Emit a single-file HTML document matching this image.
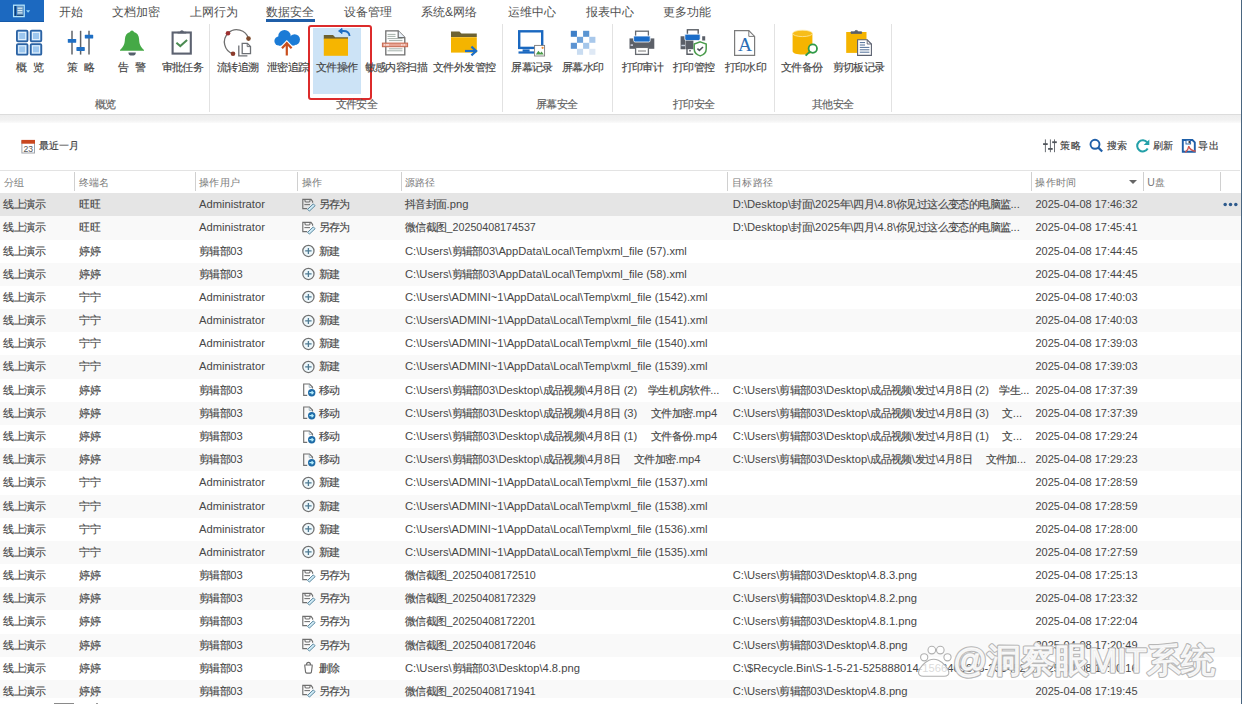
<!DOCTYPE html><html><head><meta charset="utf-8"><style>
html,body{margin:0;padding:0;width:1242px;height:704px;overflow:hidden;background:#fff;font-family:"Liberation Sans",sans-serif;}
.a{position:absolute;}
.t{position:absolute;white-space:pre;line-height:1;}
.c{-webkit-text-stroke:0.15px currentColor}
svg{display:block}
</style></head><body>

<div class="a" style="left:0;top:0;width:44.4px;height:21.7px;background:#1c69c0;box-shadow:inset 0 -1px 0 #1559a8"></div>
<svg class="a" style="left:12px;top:4px" width="20" height="14" viewBox="0 0 20 14"><rect x="1.6" y="1.2" width="10.6" height="11.4" fill="#1c69c0" stroke="#b4e4fa" stroke-width="1.3"/><rect x="2.6" y="2" width="1.2" height="9.8" fill="#0c3566"/><rect x="4.9" y="2.2" width="6.2" height="9.4" fill="#6f9cc2"/><path d="M5.6 4.2h4.8M5.6 6.6h4.8M5.6 8.9h4.8" stroke="#e8f6fe" stroke-width="1"/><rect x="4.9" y="10.8" width="6.2" height="0.9" fill="#0c3566"/><path d="M14 6.2h4.2l-2.1 2.6z" fill="#92d4f6"/></svg>
<div class="t" style="left:59.3px;top:5.5px;font-size:12px;color:#505050;"><span style="font-size:12px;letter-spacing:0px">开始</span></div>
<div class="t" style="left:112.2px;top:5.5px;font-size:12px;color:#505050;"><span style="font-size:12px;letter-spacing:0px">文档加密</span></div>
<div class="t" style="left:189.5px;top:5.5px;font-size:12px;color:#505050;"><span style="font-size:12px;letter-spacing:0px">上网行为</span></div>
<div class="t" style="left:266.3px;top:5.5px;font-size:12px;color:#505050;"><span style="font-size:12px;letter-spacing:0px">数据安全</span></div>
<div class="t" style="left:344px;top:5.5px;font-size:12px;color:#505050;"><span style="font-size:12px;letter-spacing:0px">设备管理</span></div>
<div class="t" style="left:421px;top:5.5px;font-size:12px;color:#505050;"><span style="font-size:12px;letter-spacing:0px">系统</span>&amp;<span style="font-size:12px;letter-spacing:0px">网络</span></div>
<div class="t" style="left:507.9px;top:5.5px;font-size:12px;color:#505050;"><span style="font-size:12px;letter-spacing:0px">运维中心</span></div>
<div class="t" style="left:586px;top:5.5px;font-size:12px;color:#505050;"><span style="font-size:12px;letter-spacing:0px">报表中心</span></div>
<div class="t" style="left:662.5px;top:5.5px;font-size:12px;color:#505050;"><span style="font-size:12px;letter-spacing:0px">更多功能</span></div>
<div class="a" style="left:266.3px;top:19.3px;width:48.3px;height:2.4px;background:#1f5ea8"></div>
<div class="a" style="left:313.2px;top:28px;width:47.4px;height:66px;background:#cce3f6"></div>
<div class="a" style="left:308.2px;top:25.3px;width:60.2px;height:70.6px;border:2.8px solid #dc2b2b;border-radius:3px"></div>
<div class="a" style="left:209.1px;top:24px;width:1px;height:88px;background:#e2e2e2"></div>
<div class="a" style="left:501.5px;top:24px;width:1px;height:88px;background:#e2e2e2"></div>
<div class="a" style="left:612.2px;top:24px;width:1px;height:88px;background:#e2e2e2"></div>
<div class="a" style="left:773.9px;top:24px;width:1px;height:88px;background:#e2e2e2"></div>
<div class="a" style="left:890.8px;top:24px;width:1px;height:88px;background:#e2e2e2"></div>
<div class="a" style="left:0;top:113.8px;width:1241px;height:1.2px;background:#dcdcdc"></div>
<div class="a" style="left:0;top:115px;width:1241px;height:7.5px;background:linear-gradient(#eeeeee,#f1f1f1 60%,#fbfbfb)"></div>
<div class="t" style="left:15.6px;top:62.3px;font-size:10.5px;color:#444;"><span class="c" style="font-size:11px;letter-spacing:-0.6px">概</span></div>
<div class="t" style="left:32.8px;top:62.3px;font-size:10.5px;color:#444;"><span class="c" style="font-size:11px;letter-spacing:-0.6px">览</span></div>
<div class="t" style="left:66.5px;top:62.3px;font-size:10.5px;color:#444;"><span class="c" style="font-size:11px;letter-spacing:-0.6px">策</span></div>
<div class="t" style="left:83.5px;top:62.3px;font-size:10.5px;color:#444;"><span class="c" style="font-size:11px;letter-spacing:-0.6px">略</span></div>
<div class="t" style="left:118px;top:62.3px;font-size:10.5px;color:#444;"><span class="c" style="font-size:11px;letter-spacing:-0.6px">告</span></div>
<div class="t" style="left:135px;top:62.3px;font-size:10.5px;color:#444;"><span class="c" style="font-size:11px;letter-spacing:-0.6px">警</span></div>
<div class="t" style="left:161.6px;top:62.3px;font-size:10.5px;color:#444;"><span class="c" style="font-size:11px;letter-spacing:-0.6px">审批任务</span></div>
<div class="t" style="left:217px;top:62.3px;font-size:10.5px;color:#444;"><span class="c" style="font-size:11px;letter-spacing:-0.6px">流转追溯</span></div>
<div class="t" style="left:267px;top:62.3px;font-size:10.5px;color:#444;"><span class="c" style="font-size:11px;letter-spacing:-0.6px">泄密追踪</span></div>
<div class="t" style="left:316px;top:62.3px;font-size:10.5px;color:#444;"><span class="c" style="font-size:11px;letter-spacing:-0.6px">文件操作</span></div>
<div class="t" style="left:364.5px;top:62.3px;font-size:10.5px;color:#444;"><span class="c" style="font-size:11px;letter-spacing:-0.6px">敏感内容扫描</span></div>
<div class="t" style="left:433px;top:62.3px;font-size:10.5px;color:#444;"><span class="c" style="font-size:11px;letter-spacing:-0.6px">文件外发管控</span></div>
<div class="t" style="left:511.3px;top:62.3px;font-size:10.5px;color:#444;"><span class="c" style="font-size:11px;letter-spacing:-0.6px">屏幕记录</span></div>
<div class="t" style="left:561.8px;top:62.3px;font-size:10.5px;color:#444;"><span class="c" style="font-size:11px;letter-spacing:-0.6px">屏幕水印</span></div>
<div class="t" style="left:621.7px;top:62.3px;font-size:10.5px;color:#444;"><span class="c" style="font-size:11px;letter-spacing:-0.6px">打印审计</span></div>
<div class="t" style="left:673px;top:62.3px;font-size:10.5px;color:#444;"><span class="c" style="font-size:11px;letter-spacing:-0.6px">打印管控</span></div>
<div class="t" style="left:724.5px;top:62.3px;font-size:10.5px;color:#444;"><span class="c" style="font-size:11px;letter-spacing:-0.6px">打印水印</span></div>
<div class="t" style="left:781px;top:62.3px;font-size:10.5px;color:#444;"><span class="c" style="font-size:11px;letter-spacing:-0.6px">文件备份</span></div>
<div class="t" style="left:832.7px;top:62.3px;font-size:10.5px;color:#444;"><span class="c" style="font-size:11px;letter-spacing:-0.6px">剪切板记录</span></div>
<div class="t" style="left:94.8px;top:99.4px;font-size:10.5px;color:#606060;"><span class="c" style="font-size:11px;letter-spacing:-0.6px">概览</span></div>
<div class="t" style="left:335.7px;top:99.4px;font-size:10.5px;color:#606060;"><span class="c" style="font-size:11px;letter-spacing:-0.6px">文件安全</span></div>
<div class="t" style="left:536px;top:99.4px;font-size:10.5px;color:#606060;"><span class="c" style="font-size:11px;letter-spacing:-0.6px">屏幕安全</span></div>
<div class="t" style="left:673px;top:99.4px;font-size:10.5px;color:#606060;"><span class="c" style="font-size:11px;letter-spacing:-0.6px">打印安全</span></div>
<div class="t" style="left:812px;top:99.4px;font-size:10.5px;color:#606060;"><span class="c" style="font-size:11px;letter-spacing:-0.6px">其他安全</span></div>
<div class="t" style="left:38.9px;top:140px;font-size:10.5px;color:#3c3c3c;"><span class="c" style="font-size:10px;letter-spacing:0px">最近一月</span></div>
<div class="t" style="left:1060.4px;top:140px;font-size:10.5px;color:#3c3c3c;"><span class="c" style="font-size:10px;letter-spacing:0.2px">策略</span></div>
<div class="t" style="left:1106.7px;top:140px;font-size:10.5px;color:#3c3c3c;"><span class="c" style="font-size:10px;letter-spacing:0.2px">搜索</span></div>
<div class="t" style="left:1152.6px;top:140px;font-size:10.5px;color:#3c3c3c;"><span class="c" style="font-size:10px;letter-spacing:0.2px">刷新</span></div>
<div class="t" style="left:1198.4px;top:140px;font-size:10.5px;color:#3c3c3c;"><span class="c" style="font-size:10px;letter-spacing:0.2px">导出</span></div>
<div class="a" style="left:0;top:170px;width:1240px;height:1px;background:#e3e3e3"></div>
<div class="a" style="left:0;top:192.6px;width:1240px;height:1.3px;background:#bdbdbd"></div>
<div class="a" style="left:74.2px;top:172px;width:1px;height:18.5px;background:#d0d0d0"></div>
<div class="a" style="left:194.6px;top:172px;width:1px;height:18.5px;background:#d0d0d0"></div>
<div class="a" style="left:297.1px;top:172px;width:1px;height:18.5px;background:#d0d0d0"></div>
<div class="a" style="left:400.5px;top:172px;width:1px;height:18.5px;background:#d0d0d0"></div>
<div class="a" style="left:727px;top:172px;width:1px;height:18.5px;background:#d0d0d0"></div>
<div class="a" style="left:1031.1px;top:172px;width:1px;height:18.5px;background:#d0d0d0"></div>
<div class="a" style="left:1142.5px;top:172px;width:1px;height:18.5px;background:#d0d0d0"></div>
<div class="a" style="left:1219.7px;top:172px;width:1px;height:18.5px;background:#d0d0d0"></div>
<div class="t" style="left:4px;top:176.7px;font-size:10.5px;color:#7a7a7a;"><span style="font-size:10px;letter-spacing:0.4px">分组</span></div>
<div class="t" style="left:78.5px;top:176.7px;font-size:10.5px;color:#7a7a7a;"><span style="font-size:10px;letter-spacing:0.4px">终端名</span></div>
<div class="t" style="left:198.8px;top:176.7px;font-size:10.5px;color:#7a7a7a;"><span style="font-size:10px;letter-spacing:0.4px">操作用户</span></div>
<div class="t" style="left:302px;top:176.7px;font-size:10.5px;color:#7a7a7a;"><span style="font-size:10px;letter-spacing:0.4px">操作</span></div>
<div class="t" style="left:404.5px;top:176.7px;font-size:10.5px;color:#7a7a7a;"><span style="font-size:10px;letter-spacing:0.4px">源路径</span></div>
<div class="t" style="left:732px;top:176.7px;font-size:10.5px;color:#7a7a7a;"><span style="font-size:10px;letter-spacing:0.4px">目标路径</span></div>
<div class="t" style="left:1035.2px;top:176.7px;font-size:10.5px;color:#7a7a7a;"><span style="font-size:10px;letter-spacing:0.4px">操作时间</span></div>
<div class="t" style="left:1147.3px;top:176.7px;font-size:10.5px;color:#7a7a7a;">U<span style="font-size:10px;letter-spacing:0.4px">盘</span></div>
<svg class="a" style="left:1129.4px;top:180.2px" width="8" height="4" viewBox="0 0 8 4"><path d="M0 0h8l-4 4z" fill="#666"/></svg>
<div class="a" style="left:0;top:193.30px;width:1241px;height:23.22px;background:#e5e5e5"></div>
<div class="t" style="left:3.4px;top:199.3px;font-size:10.6px;color:#474747;"><span class="c" style="font-size:11px;letter-spacing:-0.6px">线上演示</span></div>
<div class="t" style="left:79.2px;top:199.3px;font-size:10.6px;color:#474747;"><span class="c" style="font-size:11px;letter-spacing:-0.6px">旺旺</span></div>
<div class="t" style="left:199px;top:199.3px;font-size:11.2px;color:#474747;">Administrator</div>
<div class="a" style="left:300px;top:196.80px"><svg width="16" height="16" viewBox="0 0 16 16"><path d="M7.2 11.6H2.8V2.4H11l1.6 2V5.8" fill="none" stroke="#6f6f6f" stroke-width="1.15"/><path d="M5 2.4V4.1Q5 5 6 5H9Q10 5 10 4.1V2.4" fill="none" stroke="#6f6f6f" stroke-width="1.1"/><path d="M4.4 7.6H10" stroke="#6f6f6f" stroke-width="1.05"/><path d="M7.6 12.3L13.3 6.9L15.1 8.7L9.4 14.1Z" fill="#d2ecf7" stroke="#4f7f99" stroke-width="0.95"/></svg></div>
<div class="t" style="left:318.7px;top:199.3px;font-size:10.6px;color:#474747;"><span class="c" style="font-size:11px;letter-spacing:-0.6px">另存为</span></div>
<div class="t" style="left:405px;top:199.3px;font-size:11.2px;color:#474747;"><span class="c" style="font-size:11px;letter-spacing:-0.6px">抖音封面</span>.png</div>
<div class="t" style="left:732.7px;top:199.3px;font-size:11.2px;color:#474747;">D:\Desktop\<span class="c" style="font-size:11px;letter-spacing:-0.6px">封面</span>\2025<span class="c" style="font-size:11px;letter-spacing:-0.6px">年</span>\<span class="c" style="font-size:11px;letter-spacing:-0.6px">四月</span>\4.8\<span class="c" style="font-size:11px;letter-spacing:-0.6px">你见过这么变态的电脑监</span>...</div>
<div class="t" style="left:1035.4px;top:199.3px;font-size:11px;color:#474747;">2025-04-08 17:46:32</div>
<div class="a" style="left:0;top:216.47px;width:1241px;height:23.22px;background:#f9f9f9"></div>
<div class="t" style="left:3.4px;top:222.47000000000003px;font-size:10.6px;color:#474747;"><span class="c" style="font-size:11px;letter-spacing:-0.6px">线上演示</span></div>
<div class="t" style="left:79.2px;top:222.47000000000003px;font-size:10.6px;color:#474747;"><span class="c" style="font-size:11px;letter-spacing:-0.6px">旺旺</span></div>
<div class="t" style="left:199px;top:222.47000000000003px;font-size:11.2px;color:#474747;">Administrator</div>
<div class="a" style="left:300px;top:219.97px"><svg width="16" height="16" viewBox="0 0 16 16"><path d="M7.2 11.6H2.8V2.4H11l1.6 2V5.8" fill="none" stroke="#6f6f6f" stroke-width="1.15"/><path d="M5 2.4V4.1Q5 5 6 5H9Q10 5 10 4.1V2.4" fill="none" stroke="#6f6f6f" stroke-width="1.1"/><path d="M4.4 7.6H10" stroke="#6f6f6f" stroke-width="1.05"/><path d="M7.6 12.3L13.3 6.9L15.1 8.7L9.4 14.1Z" fill="#d2ecf7" stroke="#4f7f99" stroke-width="0.95"/></svg></div>
<div class="t" style="left:318.7px;top:222.47000000000003px;font-size:10.6px;color:#474747;"><span class="c" style="font-size:11px;letter-spacing:-0.6px">另存为</span></div>
<div class="t" style="left:405px;top:222.47000000000003px;font-size:10.7px;color:#474747;"><span class="c" style="font-size:11px;letter-spacing:-0.6px">微信截图</span>_20250408174537</div>
<div class="t" style="left:732.7px;top:222.47000000000003px;font-size:11.2px;color:#474747;">D:\Desktop\<span class="c" style="font-size:11px;letter-spacing:-0.6px">封面</span>\2025<span class="c" style="font-size:11px;letter-spacing:-0.6px">年</span>\<span class="c" style="font-size:11px;letter-spacing:-0.6px">四月</span>\4.8\<span class="c" style="font-size:11px;letter-spacing:-0.6px">你见过这么变态的电脑监</span>...</div>
<div class="t" style="left:1035.4px;top:222.47000000000003px;font-size:11px;color:#474747;">2025-04-08 17:45:41</div>
<div class="a" style="left:0;top:239.64px;width:1241px;height:23.22px;background:#ffffff"></div>
<div class="t" style="left:3.4px;top:245.64000000000001px;font-size:10.6px;color:#474747;"><span class="c" style="font-size:11px;letter-spacing:-0.6px">线上演示</span></div>
<div class="t" style="left:79.2px;top:245.64000000000001px;font-size:10.6px;color:#474747;"><span class="c" style="font-size:11px;letter-spacing:-0.6px">婷婷</span></div>
<div class="t" style="left:199px;top:245.64000000000001px;font-size:11.2px;color:#474747;"><span class="c" style="font-size:11px;letter-spacing:-0.6px">剪辑部</span>03</div>
<div class="a" style="left:300px;top:243.14px"><svg width="16" height="16" viewBox="0 0 16 16"><circle cx="8.4" cy="7.9" r="5.6" fill="#eef8fc" stroke="#717171" stroke-width="1.25"/><path d="M8.4 4.9v6.1M5.2 7.9h6.4" stroke="#4f7a92" stroke-width="1.3"/></svg></div>
<div class="t" style="left:318.7px;top:245.64000000000001px;font-size:10.6px;color:#474747;"><span class="c" style="font-size:11px;letter-spacing:-0.6px">新建</span></div>
<div class="t" style="left:405px;top:245.64000000000001px;font-size:11.2px;color:#474747;">C:\Users\<span class="c" style="font-size:11px;letter-spacing:-0.6px">剪辑部</span>03\AppData\Local\Temp\xml_file (57).xml</div>
<div class="t" style="left:1035.4px;top:245.64000000000001px;font-size:11px;color:#474747;">2025-04-08 17:44:45</div>
<div class="a" style="left:0;top:262.81px;width:1241px;height:23.22px;background:#f9f9f9"></div>
<div class="t" style="left:3.4px;top:268.81px;font-size:10.6px;color:#474747;"><span class="c" style="font-size:11px;letter-spacing:-0.6px">线上演示</span></div>
<div class="t" style="left:79.2px;top:268.81px;font-size:10.6px;color:#474747;"><span class="c" style="font-size:11px;letter-spacing:-0.6px">婷婷</span></div>
<div class="t" style="left:199px;top:268.81px;font-size:11.2px;color:#474747;"><span class="c" style="font-size:11px;letter-spacing:-0.6px">剪辑部</span>03</div>
<div class="a" style="left:300px;top:266.31px"><svg width="16" height="16" viewBox="0 0 16 16"><circle cx="8.4" cy="7.9" r="5.6" fill="#eef8fc" stroke="#717171" stroke-width="1.25"/><path d="M8.4 4.9v6.1M5.2 7.9h6.4" stroke="#4f7a92" stroke-width="1.3"/></svg></div>
<div class="t" style="left:318.7px;top:268.81px;font-size:10.6px;color:#474747;"><span class="c" style="font-size:11px;letter-spacing:-0.6px">新建</span></div>
<div class="t" style="left:405px;top:268.81px;font-size:11.2px;color:#474747;">C:\Users\<span class="c" style="font-size:11px;letter-spacing:-0.6px">剪辑部</span>03\AppData\Local\Temp\xml_file (58).xml</div>
<div class="t" style="left:1035.4px;top:268.81px;font-size:11px;color:#474747;">2025-04-08 17:44:45</div>
<div class="a" style="left:0;top:285.98px;width:1241px;height:23.22px;background:#ffffff"></div>
<div class="t" style="left:3.4px;top:291.98px;font-size:10.6px;color:#474747;"><span class="c" style="font-size:11px;letter-spacing:-0.6px">线上演示</span></div>
<div class="t" style="left:79.2px;top:291.98px;font-size:10.6px;color:#474747;"><span class="c" style="font-size:11px;letter-spacing:-0.6px">宁宁</span></div>
<div class="t" style="left:199px;top:291.98px;font-size:11.2px;color:#474747;">Administrator</div>
<div class="a" style="left:300px;top:289.48px"><svg width="16" height="16" viewBox="0 0 16 16"><circle cx="8.4" cy="7.9" r="5.6" fill="#eef8fc" stroke="#717171" stroke-width="1.25"/><path d="M8.4 4.9v6.1M5.2 7.9h6.4" stroke="#4f7a92" stroke-width="1.3"/></svg></div>
<div class="t" style="left:318.7px;top:291.98px;font-size:10.6px;color:#474747;"><span class="c" style="font-size:11px;letter-spacing:-0.6px">新建</span></div>
<div class="t" style="left:405px;top:291.98px;font-size:11.2px;color:#474747;">C:\Users\ADMINI~1\AppData\Local\Temp\xml_file (1542).xml</div>
<div class="t" style="left:1035.4px;top:291.98px;font-size:11px;color:#474747;">2025-04-08 17:40:03</div>
<div class="a" style="left:0;top:309.15px;width:1241px;height:23.22px;background:#f9f9f9"></div>
<div class="t" style="left:3.4px;top:315.15000000000003px;font-size:10.6px;color:#474747;"><span class="c" style="font-size:11px;letter-spacing:-0.6px">线上演示</span></div>
<div class="t" style="left:79.2px;top:315.15000000000003px;font-size:10.6px;color:#474747;"><span class="c" style="font-size:11px;letter-spacing:-0.6px">宁宁</span></div>
<div class="t" style="left:199px;top:315.15000000000003px;font-size:11.2px;color:#474747;">Administrator</div>
<div class="a" style="left:300px;top:312.65px"><svg width="16" height="16" viewBox="0 0 16 16"><circle cx="8.4" cy="7.9" r="5.6" fill="#eef8fc" stroke="#717171" stroke-width="1.25"/><path d="M8.4 4.9v6.1M5.2 7.9h6.4" stroke="#4f7a92" stroke-width="1.3"/></svg></div>
<div class="t" style="left:318.7px;top:315.15000000000003px;font-size:10.6px;color:#474747;"><span class="c" style="font-size:11px;letter-spacing:-0.6px">新建</span></div>
<div class="t" style="left:405px;top:315.15000000000003px;font-size:11.2px;color:#474747;">C:\Users\ADMINI~1\AppData\Local\Temp\xml_file (1541).xml</div>
<div class="t" style="left:1035.4px;top:315.15000000000003px;font-size:11px;color:#474747;">2025-04-08 17:40:03</div>
<div class="a" style="left:0;top:332.32px;width:1241px;height:23.22px;background:#ffffff"></div>
<div class="t" style="left:3.4px;top:338.32000000000005px;font-size:10.6px;color:#474747;"><span class="c" style="font-size:11px;letter-spacing:-0.6px">线上演示</span></div>
<div class="t" style="left:79.2px;top:338.32000000000005px;font-size:10.6px;color:#474747;"><span class="c" style="font-size:11px;letter-spacing:-0.6px">宁宁</span></div>
<div class="t" style="left:199px;top:338.32000000000005px;font-size:11.2px;color:#474747;">Administrator</div>
<div class="a" style="left:300px;top:335.82px"><svg width="16" height="16" viewBox="0 0 16 16"><circle cx="8.4" cy="7.9" r="5.6" fill="#eef8fc" stroke="#717171" stroke-width="1.25"/><path d="M8.4 4.9v6.1M5.2 7.9h6.4" stroke="#4f7a92" stroke-width="1.3"/></svg></div>
<div class="t" style="left:318.7px;top:338.32000000000005px;font-size:10.6px;color:#474747;"><span class="c" style="font-size:11px;letter-spacing:-0.6px">新建</span></div>
<div class="t" style="left:405px;top:338.32000000000005px;font-size:11.2px;color:#474747;">C:\Users\ADMINI~1\AppData\Local\Temp\xml_file (1540).xml</div>
<div class="t" style="left:1035.4px;top:338.32000000000005px;font-size:11px;color:#474747;">2025-04-08 17:39:03</div>
<div class="a" style="left:0;top:355.49px;width:1241px;height:23.22px;background:#f9f9f9"></div>
<div class="t" style="left:3.4px;top:361.49px;font-size:10.6px;color:#474747;"><span class="c" style="font-size:11px;letter-spacing:-0.6px">线上演示</span></div>
<div class="t" style="left:79.2px;top:361.49px;font-size:10.6px;color:#474747;"><span class="c" style="font-size:11px;letter-spacing:-0.6px">宁宁</span></div>
<div class="t" style="left:199px;top:361.49px;font-size:11.2px;color:#474747;">Administrator</div>
<div class="a" style="left:300px;top:358.99px"><svg width="16" height="16" viewBox="0 0 16 16"><circle cx="8.4" cy="7.9" r="5.6" fill="#eef8fc" stroke="#717171" stroke-width="1.25"/><path d="M8.4 4.9v6.1M5.2 7.9h6.4" stroke="#4f7a92" stroke-width="1.3"/></svg></div>
<div class="t" style="left:318.7px;top:361.49px;font-size:10.6px;color:#474747;"><span class="c" style="font-size:11px;letter-spacing:-0.6px">新建</span></div>
<div class="t" style="left:405px;top:361.49px;font-size:11.2px;color:#474747;">C:\Users\ADMINI~1\AppData\Local\Temp\xml_file (1539).xml</div>
<div class="t" style="left:1035.4px;top:361.49px;font-size:11px;color:#474747;">2025-04-08 17:39:03</div>
<div class="a" style="left:0;top:378.66px;width:1241px;height:23.22px;background:#ffffff"></div>
<div class="t" style="left:3.4px;top:384.66px;font-size:10.6px;color:#474747;"><span class="c" style="font-size:11px;letter-spacing:-0.6px">线上演示</span></div>
<div class="t" style="left:79.2px;top:384.66px;font-size:10.6px;color:#474747;"><span class="c" style="font-size:11px;letter-spacing:-0.6px">婷婷</span></div>
<div class="t" style="left:199px;top:384.66px;font-size:11.2px;color:#474747;"><span class="c" style="font-size:11px;letter-spacing:-0.6px">剪辑部</span>03</div>
<div class="a" style="left:300px;top:382.16px"><svg width="16" height="16" viewBox="0 0 16 16"><path d="M7.2 13.3H3.7V2H9.5l3 3v1.6" fill="none" stroke="#707070" stroke-width="1.15"/><path d="M9.2 2.6v2.8h2.8" fill="none" stroke="#9ab0bc" stroke-width="0.9"/><circle cx="11.7" cy="10.7" r="3.7" fill="#1d6aa6"/><path d="M9.4 10.7h3.4M11.6 9.2l1.6 1.5-1.6 1.5" fill="none" stroke="#b4ecfb" stroke-width="1.2"/></svg></div>
<div class="t" style="left:318.7px;top:384.66px;font-size:10.6px;color:#474747;"><span class="c" style="font-size:11px;letter-spacing:-0.6px">移动</span></div>
<div class="t" style="left:405px;top:384.66px;font-size:11.2px;color:#474747;">C:\Users\<span class="c" style="font-size:11px;letter-spacing:-0.6px">剪辑部</span>03\Desktop\<span class="c" style="font-size:11px;letter-spacing:-0.6px">成品视频</span>\4<span class="c" style="font-size:11px;letter-spacing:-0.6px">月</span>8<span class="c" style="font-size:11px;letter-spacing:-0.6px">日</span> (2)<span class="c" style="font-size:11px;letter-spacing:-0.6px">　学生机房软件</span>...</div>
<div class="t" style="left:732.7px;top:384.66px;font-size:11.2px;color:#474747;">C:\Users\<span class="c" style="font-size:11px;letter-spacing:-0.6px">剪辑部</span>03\Desktop\<span class="c" style="font-size:11px;letter-spacing:-0.6px">成品视频</span>\<span class="c" style="font-size:11px;letter-spacing:-0.6px">发过</span>\4<span class="c" style="font-size:11px;letter-spacing:-0.6px">月</span>8<span class="c" style="font-size:11px;letter-spacing:-0.6px">日</span> (2)<span class="c" style="font-size:11px;letter-spacing:-0.6px">　学生</span>...</div>
<div class="t" style="left:1035.4px;top:384.66px;font-size:11px;color:#474747;">2025-04-08 17:37:39</div>
<div class="a" style="left:0;top:401.83px;width:1241px;height:23.22px;background:#f9f9f9"></div>
<div class="t" style="left:3.4px;top:407.83000000000004px;font-size:10.6px;color:#474747;"><span class="c" style="font-size:11px;letter-spacing:-0.6px">线上演示</span></div>
<div class="t" style="left:79.2px;top:407.83000000000004px;font-size:10.6px;color:#474747;"><span class="c" style="font-size:11px;letter-spacing:-0.6px">婷婷</span></div>
<div class="t" style="left:199px;top:407.83000000000004px;font-size:11.2px;color:#474747;"><span class="c" style="font-size:11px;letter-spacing:-0.6px">剪辑部</span>03</div>
<div class="a" style="left:300px;top:405.33px"><svg width="16" height="16" viewBox="0 0 16 16"><path d="M7.2 13.3H3.7V2H9.5l3 3v1.6" fill="none" stroke="#707070" stroke-width="1.15"/><path d="M9.2 2.6v2.8h2.8" fill="none" stroke="#9ab0bc" stroke-width="0.9"/><circle cx="11.7" cy="10.7" r="3.7" fill="#1d6aa6"/><path d="M9.4 10.7h3.4M11.6 9.2l1.6 1.5-1.6 1.5" fill="none" stroke="#b4ecfb" stroke-width="1.2"/></svg></div>
<div class="t" style="left:318.7px;top:407.83000000000004px;font-size:10.6px;color:#474747;"><span class="c" style="font-size:11px;letter-spacing:-0.6px">移动</span></div>
<div class="t" style="left:405px;top:407.83000000000004px;font-size:11.2px;color:#474747;">C:\Users\<span class="c" style="font-size:11px;letter-spacing:-0.6px">剪辑部</span>03\Desktop\<span class="c" style="font-size:11px;letter-spacing:-0.6px">成品视频</span>\4<span class="c" style="font-size:11px;letter-spacing:-0.6px">月</span>8<span class="c" style="font-size:11px;letter-spacing:-0.6px">日</span> (3)<span class="c" style="font-size:11px;letter-spacing:-0.6px">　</span> <span class="c" style="font-size:11px;letter-spacing:-0.6px">文件加密</span>.mp4</div>
<div class="t" style="left:732.7px;top:407.83000000000004px;font-size:11.2px;color:#474747;">C:\Users\<span class="c" style="font-size:11px;letter-spacing:-0.6px">剪辑部</span>03\Desktop\<span class="c" style="font-size:11px;letter-spacing:-0.6px">成品视频</span>\<span class="c" style="font-size:11px;letter-spacing:-0.6px">发过</span>\4<span class="c" style="font-size:11px;letter-spacing:-0.6px">月</span>8<span class="c" style="font-size:11px;letter-spacing:-0.6px">日</span> (3)<span class="c" style="font-size:11px;letter-spacing:-0.6px">　</span> <span class="c" style="font-size:11px;letter-spacing:-0.6px">文</span>...</div>
<div class="t" style="left:1035.4px;top:407.83000000000004px;font-size:11px;color:#474747;">2025-04-08 17:37:39</div>
<div class="a" style="left:0;top:425.00px;width:1241px;height:23.22px;background:#ffffff"></div>
<div class="t" style="left:3.4px;top:431.0px;font-size:10.6px;color:#474747;"><span class="c" style="font-size:11px;letter-spacing:-0.6px">线上演示</span></div>
<div class="t" style="left:79.2px;top:431.0px;font-size:10.6px;color:#474747;"><span class="c" style="font-size:11px;letter-spacing:-0.6px">婷婷</span></div>
<div class="t" style="left:199px;top:431.0px;font-size:11.2px;color:#474747;"><span class="c" style="font-size:11px;letter-spacing:-0.6px">剪辑部</span>03</div>
<div class="a" style="left:300px;top:428.50px"><svg width="16" height="16" viewBox="0 0 16 16"><path d="M7.2 13.3H3.7V2H9.5l3 3v1.6" fill="none" stroke="#707070" stroke-width="1.15"/><path d="M9.2 2.6v2.8h2.8" fill="none" stroke="#9ab0bc" stroke-width="0.9"/><circle cx="11.7" cy="10.7" r="3.7" fill="#1d6aa6"/><path d="M9.4 10.7h3.4M11.6 9.2l1.6 1.5-1.6 1.5" fill="none" stroke="#b4ecfb" stroke-width="1.2"/></svg></div>
<div class="t" style="left:318.7px;top:431.0px;font-size:10.6px;color:#474747;"><span class="c" style="font-size:11px;letter-spacing:-0.6px">移动</span></div>
<div class="t" style="left:405px;top:431.0px;font-size:11.2px;color:#474747;">C:\Users\<span class="c" style="font-size:11px;letter-spacing:-0.6px">剪辑部</span>03\Desktop\<span class="c" style="font-size:11px;letter-spacing:-0.6px">成品视频</span>\4<span class="c" style="font-size:11px;letter-spacing:-0.6px">月</span>8<span class="c" style="font-size:11px;letter-spacing:-0.6px">日</span> (1)<span class="c" style="font-size:11px;letter-spacing:-0.6px">　</span> <span class="c" style="font-size:11px;letter-spacing:-0.6px">文件备份</span>.mp4</div>
<div class="t" style="left:732.7px;top:431.0px;font-size:11.2px;color:#474747;">C:\Users\<span class="c" style="font-size:11px;letter-spacing:-0.6px">剪辑部</span>03\Desktop\<span class="c" style="font-size:11px;letter-spacing:-0.6px">成品视频</span>\<span class="c" style="font-size:11px;letter-spacing:-0.6px">发过</span>\4<span class="c" style="font-size:11px;letter-spacing:-0.6px">月</span>8<span class="c" style="font-size:11px;letter-spacing:-0.6px">日</span> (1)<span class="c" style="font-size:11px;letter-spacing:-0.6px">　</span> <span class="c" style="font-size:11px;letter-spacing:-0.6px">文</span>...</div>
<div class="t" style="left:1035.4px;top:431.0px;font-size:11px;color:#474747;">2025-04-08 17:29:24</div>
<div class="a" style="left:0;top:448.17px;width:1241px;height:23.22px;background:#f9f9f9"></div>
<div class="t" style="left:3.4px;top:454.17px;font-size:10.6px;color:#474747;"><span class="c" style="font-size:11px;letter-spacing:-0.6px">线上演示</span></div>
<div class="t" style="left:79.2px;top:454.17px;font-size:10.6px;color:#474747;"><span class="c" style="font-size:11px;letter-spacing:-0.6px">婷婷</span></div>
<div class="t" style="left:199px;top:454.17px;font-size:11.2px;color:#474747;"><span class="c" style="font-size:11px;letter-spacing:-0.6px">剪辑部</span>03</div>
<div class="a" style="left:300px;top:451.67px"><svg width="16" height="16" viewBox="0 0 16 16"><path d="M7.2 13.3H3.7V2H9.5l3 3v1.6" fill="none" stroke="#707070" stroke-width="1.15"/><path d="M9.2 2.6v2.8h2.8" fill="none" stroke="#9ab0bc" stroke-width="0.9"/><circle cx="11.7" cy="10.7" r="3.7" fill="#1d6aa6"/><path d="M9.4 10.7h3.4M11.6 9.2l1.6 1.5-1.6 1.5" fill="none" stroke="#b4ecfb" stroke-width="1.2"/></svg></div>
<div class="t" style="left:318.7px;top:454.17px;font-size:10.6px;color:#474747;"><span class="c" style="font-size:11px;letter-spacing:-0.6px">移动</span></div>
<div class="t" style="left:405px;top:454.17px;font-size:11.2px;color:#474747;">C:\Users\<span class="c" style="font-size:11px;letter-spacing:-0.6px">剪辑部</span>03\Desktop\<span class="c" style="font-size:11px;letter-spacing:-0.6px">成品视频</span>\4<span class="c" style="font-size:11px;letter-spacing:-0.6px">月</span>8<span class="c" style="font-size:11px;letter-spacing:-0.6px">日　</span> <span class="c" style="font-size:11px;letter-spacing:-0.6px">文件加密</span>.mp4</div>
<div class="t" style="left:732.7px;top:454.17px;font-size:11.2px;color:#474747;">C:\Users\<span class="c" style="font-size:11px;letter-spacing:-0.6px">剪辑部</span>03\Desktop\<span class="c" style="font-size:11px;letter-spacing:-0.6px">成品视频</span>\<span class="c" style="font-size:11px;letter-spacing:-0.6px">发过</span>\4<span class="c" style="font-size:11px;letter-spacing:-0.6px">月</span>8<span class="c" style="font-size:11px;letter-spacing:-0.6px">日　</span> <span class="c" style="font-size:11px;letter-spacing:-0.6px">文件加</span>...</div>
<div class="t" style="left:1035.4px;top:454.17px;font-size:11px;color:#474747;">2025-04-08 17:29:23</div>
<div class="a" style="left:0;top:471.34px;width:1241px;height:23.22px;background:#ffffff"></div>
<div class="t" style="left:3.4px;top:477.34000000000003px;font-size:10.6px;color:#474747;"><span class="c" style="font-size:11px;letter-spacing:-0.6px">线上演示</span></div>
<div class="t" style="left:79.2px;top:477.34000000000003px;font-size:10.6px;color:#474747;"><span class="c" style="font-size:11px;letter-spacing:-0.6px">宁宁</span></div>
<div class="t" style="left:199px;top:477.34000000000003px;font-size:11.2px;color:#474747;">Administrator</div>
<div class="a" style="left:300px;top:474.84px"><svg width="16" height="16" viewBox="0 0 16 16"><circle cx="8.4" cy="7.9" r="5.6" fill="#eef8fc" stroke="#717171" stroke-width="1.25"/><path d="M8.4 4.9v6.1M5.2 7.9h6.4" stroke="#4f7a92" stroke-width="1.3"/></svg></div>
<div class="t" style="left:318.7px;top:477.34000000000003px;font-size:10.6px;color:#474747;"><span class="c" style="font-size:11px;letter-spacing:-0.6px">新建</span></div>
<div class="t" style="left:405px;top:477.34000000000003px;font-size:11.2px;color:#474747;">C:\Users\ADMINI~1\AppData\Local\Temp\xml_file (1537).xml</div>
<div class="t" style="left:1035.4px;top:477.34000000000003px;font-size:11px;color:#474747;">2025-04-08 17:28:59</div>
<div class="a" style="left:0;top:494.51px;width:1241px;height:23.22px;background:#f9f9f9"></div>
<div class="t" style="left:3.4px;top:500.51000000000005px;font-size:10.6px;color:#474747;"><span class="c" style="font-size:11px;letter-spacing:-0.6px">线上演示</span></div>
<div class="t" style="left:79.2px;top:500.51000000000005px;font-size:10.6px;color:#474747;"><span class="c" style="font-size:11px;letter-spacing:-0.6px">宁宁</span></div>
<div class="t" style="left:199px;top:500.51000000000005px;font-size:11.2px;color:#474747;">Administrator</div>
<div class="a" style="left:300px;top:498.01px"><svg width="16" height="16" viewBox="0 0 16 16"><circle cx="8.4" cy="7.9" r="5.6" fill="#eef8fc" stroke="#717171" stroke-width="1.25"/><path d="M8.4 4.9v6.1M5.2 7.9h6.4" stroke="#4f7a92" stroke-width="1.3"/></svg></div>
<div class="t" style="left:318.7px;top:500.51000000000005px;font-size:10.6px;color:#474747;"><span class="c" style="font-size:11px;letter-spacing:-0.6px">新建</span></div>
<div class="t" style="left:405px;top:500.51000000000005px;font-size:11.2px;color:#474747;">C:\Users\ADMINI~1\AppData\Local\Temp\xml_file (1538).xml</div>
<div class="t" style="left:1035.4px;top:500.51000000000005px;font-size:11px;color:#474747;">2025-04-08 17:28:59</div>
<div class="a" style="left:0;top:517.68px;width:1241px;height:23.22px;background:#ffffff"></div>
<div class="t" style="left:3.4px;top:523.6800000000001px;font-size:10.6px;color:#474747;"><span class="c" style="font-size:11px;letter-spacing:-0.6px">线上演示</span></div>
<div class="t" style="left:79.2px;top:523.6800000000001px;font-size:10.6px;color:#474747;"><span class="c" style="font-size:11px;letter-spacing:-0.6px">宁宁</span></div>
<div class="t" style="left:199px;top:523.6800000000001px;font-size:11.2px;color:#474747;">Administrator</div>
<div class="a" style="left:300px;top:521.18px"><svg width="16" height="16" viewBox="0 0 16 16"><circle cx="8.4" cy="7.9" r="5.6" fill="#eef8fc" stroke="#717171" stroke-width="1.25"/><path d="M8.4 4.9v6.1M5.2 7.9h6.4" stroke="#4f7a92" stroke-width="1.3"/></svg></div>
<div class="t" style="left:318.7px;top:523.6800000000001px;font-size:10.6px;color:#474747;"><span class="c" style="font-size:11px;letter-spacing:-0.6px">新建</span></div>
<div class="t" style="left:405px;top:523.6800000000001px;font-size:11.2px;color:#474747;">C:\Users\ADMINI~1\AppData\Local\Temp\xml_file (1536).xml</div>
<div class="t" style="left:1035.4px;top:523.6800000000001px;font-size:11px;color:#474747;">2025-04-08 17:28:00</div>
<div class="a" style="left:0;top:540.85px;width:1241px;height:23.22px;background:#f9f9f9"></div>
<div class="t" style="left:3.4px;top:546.85px;font-size:10.6px;color:#474747;"><span class="c" style="font-size:11px;letter-spacing:-0.6px">线上演示</span></div>
<div class="t" style="left:79.2px;top:546.85px;font-size:10.6px;color:#474747;"><span class="c" style="font-size:11px;letter-spacing:-0.6px">宁宁</span></div>
<div class="t" style="left:199px;top:546.85px;font-size:11.2px;color:#474747;">Administrator</div>
<div class="a" style="left:300px;top:544.35px"><svg width="16" height="16" viewBox="0 0 16 16"><circle cx="8.4" cy="7.9" r="5.6" fill="#eef8fc" stroke="#717171" stroke-width="1.25"/><path d="M8.4 4.9v6.1M5.2 7.9h6.4" stroke="#4f7a92" stroke-width="1.3"/></svg></div>
<div class="t" style="left:318.7px;top:546.85px;font-size:10.6px;color:#474747;"><span class="c" style="font-size:11px;letter-spacing:-0.6px">新建</span></div>
<div class="t" style="left:405px;top:546.85px;font-size:11.2px;color:#474747;">C:\Users\ADMINI~1\AppData\Local\Temp\xml_file (1535).xml</div>
<div class="t" style="left:1035.4px;top:546.85px;font-size:11px;color:#474747;">2025-04-08 17:27:59</div>
<div class="a" style="left:0;top:564.02px;width:1241px;height:23.22px;background:#ffffff"></div>
<div class="t" style="left:3.4px;top:570.02px;font-size:10.6px;color:#474747;"><span class="c" style="font-size:11px;letter-spacing:-0.6px">线上演示</span></div>
<div class="t" style="left:79.2px;top:570.02px;font-size:10.6px;color:#474747;"><span class="c" style="font-size:11px;letter-spacing:-0.6px">婷婷</span></div>
<div class="t" style="left:199px;top:570.02px;font-size:11.2px;color:#474747;"><span class="c" style="font-size:11px;letter-spacing:-0.6px">剪辑部</span>03</div>
<div class="a" style="left:300px;top:567.52px"><svg width="16" height="16" viewBox="0 0 16 16"><path d="M7.2 11.6H2.8V2.4H11l1.6 2V5.8" fill="none" stroke="#6f6f6f" stroke-width="1.15"/><path d="M5 2.4V4.1Q5 5 6 5H9Q10 5 10 4.1V2.4" fill="none" stroke="#6f6f6f" stroke-width="1.1"/><path d="M4.4 7.6H10" stroke="#6f6f6f" stroke-width="1.05"/><path d="M7.6 12.3L13.3 6.9L15.1 8.7L9.4 14.1Z" fill="#d2ecf7" stroke="#4f7f99" stroke-width="0.95"/></svg></div>
<div class="t" style="left:318.7px;top:570.02px;font-size:10.6px;color:#474747;"><span class="c" style="font-size:11px;letter-spacing:-0.6px">另存为</span></div>
<div class="t" style="left:405px;top:570.02px;font-size:10.7px;color:#474747;"><span class="c" style="font-size:11px;letter-spacing:-0.6px">微信截图</span>_20250408172510</div>
<div class="t" style="left:732.7px;top:570.02px;font-size:11.2px;color:#474747;">C:\Users\<span class="c" style="font-size:11px;letter-spacing:-0.6px">剪辑部</span>03\Desktop\4.8.3.png</div>
<div class="t" style="left:1035.4px;top:570.02px;font-size:11px;color:#474747;">2025-04-08 17:25:13</div>
<div class="a" style="left:0;top:587.19px;width:1241px;height:23.22px;background:#f9f9f9"></div>
<div class="t" style="left:3.4px;top:593.19px;font-size:10.6px;color:#474747;"><span class="c" style="font-size:11px;letter-spacing:-0.6px">线上演示</span></div>
<div class="t" style="left:79.2px;top:593.19px;font-size:10.6px;color:#474747;"><span class="c" style="font-size:11px;letter-spacing:-0.6px">婷婷</span></div>
<div class="t" style="left:199px;top:593.19px;font-size:11.2px;color:#474747;"><span class="c" style="font-size:11px;letter-spacing:-0.6px">剪辑部</span>03</div>
<div class="a" style="left:300px;top:590.69px"><svg width="16" height="16" viewBox="0 0 16 16"><path d="M7.2 11.6H2.8V2.4H11l1.6 2V5.8" fill="none" stroke="#6f6f6f" stroke-width="1.15"/><path d="M5 2.4V4.1Q5 5 6 5H9Q10 5 10 4.1V2.4" fill="none" stroke="#6f6f6f" stroke-width="1.1"/><path d="M4.4 7.6H10" stroke="#6f6f6f" stroke-width="1.05"/><path d="M7.6 12.3L13.3 6.9L15.1 8.7L9.4 14.1Z" fill="#d2ecf7" stroke="#4f7f99" stroke-width="0.95"/></svg></div>
<div class="t" style="left:318.7px;top:593.19px;font-size:10.6px;color:#474747;"><span class="c" style="font-size:11px;letter-spacing:-0.6px">另存为</span></div>
<div class="t" style="left:405px;top:593.19px;font-size:10.7px;color:#474747;"><span class="c" style="font-size:11px;letter-spacing:-0.6px">微信截图</span>_20250408172329</div>
<div class="t" style="left:732.7px;top:593.19px;font-size:11.2px;color:#474747;">C:\Users\<span class="c" style="font-size:11px;letter-spacing:-0.6px">剪辑部</span>03\Desktop\4.8.2.png</div>
<div class="t" style="left:1035.4px;top:593.19px;font-size:11px;color:#474747;">2025-04-08 17:23:32</div>
<div class="a" style="left:0;top:610.36px;width:1241px;height:23.22px;background:#ffffff"></div>
<div class="t" style="left:3.4px;top:616.3600000000001px;font-size:10.6px;color:#474747;"><span class="c" style="font-size:11px;letter-spacing:-0.6px">线上演示</span></div>
<div class="t" style="left:79.2px;top:616.3600000000001px;font-size:10.6px;color:#474747;"><span class="c" style="font-size:11px;letter-spacing:-0.6px">婷婷</span></div>
<div class="t" style="left:199px;top:616.3600000000001px;font-size:11.2px;color:#474747;"><span class="c" style="font-size:11px;letter-spacing:-0.6px">剪辑部</span>03</div>
<div class="a" style="left:300px;top:613.86px"><svg width="16" height="16" viewBox="0 0 16 16"><path d="M7.2 11.6H2.8V2.4H11l1.6 2V5.8" fill="none" stroke="#6f6f6f" stroke-width="1.15"/><path d="M5 2.4V4.1Q5 5 6 5H9Q10 5 10 4.1V2.4" fill="none" stroke="#6f6f6f" stroke-width="1.1"/><path d="M4.4 7.6H10" stroke="#6f6f6f" stroke-width="1.05"/><path d="M7.6 12.3L13.3 6.9L15.1 8.7L9.4 14.1Z" fill="#d2ecf7" stroke="#4f7f99" stroke-width="0.95"/></svg></div>
<div class="t" style="left:318.7px;top:616.3600000000001px;font-size:10.6px;color:#474747;"><span class="c" style="font-size:11px;letter-spacing:-0.6px">另存为</span></div>
<div class="t" style="left:405px;top:616.3600000000001px;font-size:10.7px;color:#474747;"><span class="c" style="font-size:11px;letter-spacing:-0.6px">微信截图</span>_20250408172201</div>
<div class="t" style="left:732.7px;top:616.3600000000001px;font-size:11.2px;color:#474747;">C:\Users\<span class="c" style="font-size:11px;letter-spacing:-0.6px">剪辑部</span>03\Desktop\4.8.1.png</div>
<div class="t" style="left:1035.4px;top:616.3600000000001px;font-size:11px;color:#474747;">2025-04-08 17:22:04</div>
<div class="a" style="left:0;top:633.53px;width:1241px;height:23.22px;background:#f9f9f9"></div>
<div class="t" style="left:3.4px;top:639.53px;font-size:10.6px;color:#474747;"><span class="c" style="font-size:11px;letter-spacing:-0.6px">线上演示</span></div>
<div class="t" style="left:79.2px;top:639.53px;font-size:10.6px;color:#474747;"><span class="c" style="font-size:11px;letter-spacing:-0.6px">婷婷</span></div>
<div class="t" style="left:199px;top:639.53px;font-size:11.2px;color:#474747;"><span class="c" style="font-size:11px;letter-spacing:-0.6px">剪辑部</span>03</div>
<div class="a" style="left:300px;top:637.03px"><svg width="16" height="16" viewBox="0 0 16 16"><path d="M7.2 11.6H2.8V2.4H11l1.6 2V5.8" fill="none" stroke="#6f6f6f" stroke-width="1.15"/><path d="M5 2.4V4.1Q5 5 6 5H9Q10 5 10 4.1V2.4" fill="none" stroke="#6f6f6f" stroke-width="1.1"/><path d="M4.4 7.6H10" stroke="#6f6f6f" stroke-width="1.05"/><path d="M7.6 12.3L13.3 6.9L15.1 8.7L9.4 14.1Z" fill="#d2ecf7" stroke="#4f7f99" stroke-width="0.95"/></svg></div>
<div class="t" style="left:318.7px;top:639.53px;font-size:10.6px;color:#474747;"><span class="c" style="font-size:11px;letter-spacing:-0.6px">另存为</span></div>
<div class="t" style="left:405px;top:639.53px;font-size:10.7px;color:#474747;"><span class="c" style="font-size:11px;letter-spacing:-0.6px">微信截图</span>_20250408172046</div>
<div class="t" style="left:732.7px;top:639.53px;font-size:11.2px;color:#474747;">C:\Users\<span class="c" style="font-size:11px;letter-spacing:-0.6px">剪辑部</span>03\Desktop\4.8.png</div>
<div class="t" style="left:1035.4px;top:639.53px;font-size:11px;color:#474747;">2025-04-08 17:20:49</div>
<div class="a" style="left:0;top:656.70px;width:1241px;height:23.22px;background:#ffffff"></div>
<div class="t" style="left:3.4px;top:662.7px;font-size:10.6px;color:#474747;"><span class="c" style="font-size:11px;letter-spacing:-0.6px">线上演示</span></div>
<div class="t" style="left:79.2px;top:662.7px;font-size:10.6px;color:#474747;"><span class="c" style="font-size:11px;letter-spacing:-0.6px">婷婷</span></div>
<div class="t" style="left:199px;top:662.7px;font-size:11.2px;color:#474747;"><span class="c" style="font-size:11px;letter-spacing:-0.6px">剪辑部</span>03</div>
<div class="a" style="left:300px;top:660.20px"><svg width="16" height="16" viewBox="0 0 16 16"><path d="M4.3 5H12.6M6.4 5Q6.6 2.3 8.5 2.3Q10.4 2.3 10.6 5" fill="none" stroke="#6d6d6d" stroke-width="1.15"/><path d="M4.7 5.2L5.6 12.2Q5.8 13.1 6.7 13.1H10.3Q11.2 13.1 11.4 12.2L12.3 5.2" fill="none" stroke="#6d6d6d" stroke-width="1.15"/></svg></div>
<div class="t" style="left:318.7px;top:662.7px;font-size:10.6px;color:#474747;"><span class="c" style="font-size:11px;letter-spacing:-0.6px">删除</span></div>
<div class="t" style="left:405px;top:662.7px;font-size:11.2px;color:#474747;">C:\Users\<span class="c" style="font-size:11px;letter-spacing:-0.6px">剪辑部</span>03\Desktop\4.8.png</div>
<div class="t" style="left:732.7px;top:662.7px;font-size:11.2px;color:#474747;">C:\$Recycle.Bin\S-1-5-21-525888014-1566409076-2334521...</div>
<div class="t" style="left:1035.4px;top:662.7px;font-size:11px;color:#474747;">2025-04-08 17:20:16</div>
<div class="a" style="left:0;top:679.87px;width:1241px;height:23.22px;background:#f9f9f9"></div>
<div class="t" style="left:3.4px;top:685.8700000000001px;font-size:10.6px;color:#474747;"><span class="c" style="font-size:11px;letter-spacing:-0.6px">线上演示</span></div>
<div class="t" style="left:79.2px;top:685.8700000000001px;font-size:10.6px;color:#474747;"><span class="c" style="font-size:11px;letter-spacing:-0.6px">婷婷</span></div>
<div class="t" style="left:199px;top:685.8700000000001px;font-size:11.2px;color:#474747;"><span class="c" style="font-size:11px;letter-spacing:-0.6px">剪辑部</span>03</div>
<div class="a" style="left:300px;top:683.37px"><svg width="16" height="16" viewBox="0 0 16 16"><path d="M7.2 11.6H2.8V2.4H11l1.6 2V5.8" fill="none" stroke="#6f6f6f" stroke-width="1.15"/><path d="M5 2.4V4.1Q5 5 6 5H9Q10 5 10 4.1V2.4" fill="none" stroke="#6f6f6f" stroke-width="1.1"/><path d="M4.4 7.6H10" stroke="#6f6f6f" stroke-width="1.05"/><path d="M7.6 12.3L13.3 6.9L15.1 8.7L9.4 14.1Z" fill="#d2ecf7" stroke="#4f7f99" stroke-width="0.95"/></svg></div>
<div class="t" style="left:318.7px;top:685.8700000000001px;font-size:10.6px;color:#474747;"><span class="c" style="font-size:11px;letter-spacing:-0.6px">另存为</span></div>
<div class="t" style="left:405px;top:685.8700000000001px;font-size:10.7px;color:#474747;"><span class="c" style="font-size:11px;letter-spacing:-0.6px">微信截图</span>_20250408171941</div>
<div class="t" style="left:732.7px;top:685.8700000000001px;font-size:11.2px;color:#474747;">C:\Users\<span class="c" style="font-size:11px;letter-spacing:-0.6px">剪辑部</span>03\Desktop\4.8.png</div>
<div class="t" style="left:1035.4px;top:685.8700000000001px;font-size:11px;color:#474747;">2025-04-08 17:19:45</div>
<svg class="a" style="left:1223px;top:202px" width="16" height="5" viewBox="0 0 16 5"><circle cx="2.2" cy="2.5" r="1.75" fill="#2d5a8c"/><circle cx="7.5" cy="2.5" r="1.75" fill="#2d5a8c"/><circle cx="12.8" cy="2.5" r="1.75" fill="#2d5a8c"/></svg>
<div class="a" style="left:0;top:697.5px;width:1241px;height:7px;background:#fff"></div>
<svg class="a" style="left:900px;top:630px" width="330" height="56" viewBox="900 630 330 56"><g fill="rgba(255,255,255,0.8)" stroke="#b0b0b0" stroke-width="1.1"><path d="M929 660.2c2.8-1.2 6.6-1.2 9.4 0c4.6 2 9.8 8 10.4 11.6c0.5 3-1.6 4.4-4.6 4.4h-21c-3 0-5.1-1.4-4.6-4.4c0.6-3.6 5.8-9.6 10.4-11.6z"/><circle cx="924.2" cy="657.3" r="3.6"/><circle cx="931.8" cy="650.1" r="3.8"/><circle cx="940.3" cy="650.1" r="3.8"/><circle cx="947.5" cy="657.3" r="3.6"/></g><g font-family="Liberation Sans" font-size="33.5" stroke-linejoin="round"><text x="953" y="671.5" fill="none" stroke="#b0b0b0" stroke-width="3.4" opacity="0.9">@洞察眼MIT系统</text><text x="953" y="671.5" fill="rgba(255,255,255,0.8)" stroke="rgba(255,255,255,0.8)" stroke-width="1.3">@洞察眼MIT系统</text></g></svg>
<div class="a" style="left:53.5px;top:702.8px;width:20px;height:1.2px;background:#8a8a8a"></div>
<div class="a" style="left:95.5px;top:702.8px;width:2px;height:1.2px;background:#999"></div>
<div class="a" style="left:1240.7px;top:0;width:1.3px;height:704px;background:#4a6680"></div>
<svg class="a" style="left:0;top:0" width="1242" height="170" viewBox="0 0 1242 170"><rect x="16.9" y="30.7" width="10.6" height="10.6" rx="1" fill="#a9cff2" stroke="#2b62a3" stroke-width="1.8"/><rect x="18.7" y="32.5" width="7" height="7" fill="#9cc6ee" stroke="#e9f4fd" stroke-width="0.9"/><rect x="30.7" y="30.7" width="10.6" height="10.6" rx="1" fill="#a9cff2" stroke="#2b62a3" stroke-width="1.8"/><rect x="32.5" y="32.5" width="7" height="7" fill="#9cc6ee" stroke="#e9f4fd" stroke-width="0.9"/><rect x="16.9" y="44.1" width="10.6" height="10.6" rx="1" fill="#a9cff2" stroke="#2b62a3" stroke-width="1.8"/><rect x="18.7" y="45.9" width="7" height="7" fill="#9cc6ee" stroke="#e9f4fd" stroke-width="0.9"/><rect x="30.7" y="44.1" width="10.6" height="10.6" rx="1" fill="#a9cff2" stroke="#2b62a3" stroke-width="1.8"/><rect x="32.5" y="45.9" width="7" height="7" fill="#9cc6ee" stroke="#e9f4fd" stroke-width="0.9"/><line x1="72" y1="30.8" x2="72" y2="54.6" stroke="#5f6368" stroke-width="1.5"/><line x1="80.6" y1="30.8" x2="80.6" y2="54.6" stroke="#5f6368" stroke-width="1.5"/><line x1="89" y1="30.8" x2="89" y2="54.6" stroke="#5f6368" stroke-width="1.5"/><rect x="67.8" y="39.0" width="8.4" height="3.8" rx="0.6" fill="#1f6fc4"/><rect x="76.39999999999999" y="47.1" width="8.4" height="3.8" rx="0.6" fill="#1f6fc4"/><rect x="84.8" y="34.800000000000004" width="8.4" height="3.8" rx="0.6" fill="#1f6fc4"/><path d="M132 30.4c-1.1 0-1.8 0.8-1.9 1.7c-3.3 0.9-5.1 3.6-5.2 7.2c-0.1 4.4-1.2 7.6-4.9 10.6v0.9h24v-0.9c-3.7-3-4.8-6.2-4.9-10.6c-0.1-3.6-1.9-6.3-5.2-7.2c-0.1-0.9-0.8-1.7-1.9-1.7z" fill="#45a946"/><path d="M128.4 52.4h7.4a3.7 3.2 0 0 1-7.4 0z" fill="#55606c"/><rect x="172.6" y="32.5" width="18.2" height="21.1" fill="#fff" stroke="#5c6270" stroke-width="2.1"/><path d="M177.6 33.4v-1.6h2.2a2.2 2.2 0 0 1 4.2 0h2.2v1.6z" fill="#5c6270"/><path d="M176.4 42.8l3.9 3.3l6.8-6" fill="none" stroke="#4b8b52" stroke-width="2"/><path d="M233 53.8A12.3 12.3 0 1 1 248.5 38.6" fill="none" stroke="#707070" stroke-width="1.3"/><circle cx="228" cy="33.2" r="2.3" fill="#9d3030"/><circle cx="248.5" cy="38.6" r="2.3" fill="#7d4a2c"/><circle cx="233" cy="53.8" r="2.3" fill="#8b3a2b"/><path d="M238.8 45.6v10.2h8.6" fill="none" stroke="#6d7075" stroke-width="1.3"/><path d="M242.2 43.4h5.2l3.1 3.1v7.1h-8.3z" fill="#fff" stroke="#6d7075" stroke-width="1.3"/><path d="M247.2 43.6v3h3" fill="none" stroke="#6d7075" stroke-width="1"/><g fill="#1b7bd6"><circle cx="284.5" cy="36.2" r="6.2"/><circle cx="294.6" cy="39.6" r="5.4"/><circle cx="279" cy="41" r="4.6"/><rect x="279" y="38" width="15.6" height="7.6"/></g><path d="M279.5 47.5l7.3-7.4l7.3 7.4z" fill="#fff"/><path d="M282 48.2l4.8-5l4.8 5M286.8 43.6v12" fill="none" stroke="#c94e1c" stroke-width="2.2"/><path d="M323.8 35h9.2l2.2 2.2h12.8v2h-24.2z" fill="#6d6232"/><rect x="323.8" y="38.6" width="24.2" height="17.2" fill="#f6b500"/><path d="M349.6 36c-0.4-3.2-2.8-5-6-5h-3.6" fill="none" stroke="#1e6ec4" stroke-width="1.8"/><path d="M342 28.4l-3.4 2.6l3.4 2.6z" fill="#1e6ec4" stroke="#1e6ec4" stroke-width="1"/><path d="M385.8 30.8h12.4l6.6 6.8v17.2h-19z" fill="#fff" stroke="#6e6e6e" stroke-width="1.3"/><path d="M398.2 30.8v6.8h6.6" fill="#eaf2fa" stroke="#6e6e6e" stroke-width="1.2"/><g stroke="#9aa7a0" stroke-width="0.9"><line x1="387.5" y1="34.4" x2="395.5" y2="34.4"/><line x1="387.5" y1="36.4" x2="395.5" y2="36.4"/><line x1="387.5" y1="38.6" x2="402.5" y2="38.6"/><line x1="389" y1="40.6" x2="402.5" y2="40.6"/><line x1="389" y1="48.8" x2="402.5" y2="48.8"/><line x1="387.5" y1="50.8" x2="402.5" y2="50.8"/></g><rect x="382.4" y="43.1" width="25.2" height="3.6" fill="#e8a494" stroke="#c5674e" stroke-width="1"/><g fill="#fff" opacity="0.8"><rect x="384" y="44.3" width="1.2" height="1.2"/><rect x="386" y="44.3" width="3" height="1.2"/><rect x="401" y="44.3" width="1.6" height="1.2"/><rect x="403.5" y="44.3" width="1.6" height="1.2"/></g><path d="M451 31.5h8.4l2 2h15.4v3.6h-25.8z" fill="#6d6232"/><rect x="451" y="37.2" width="25.8" height="15.4" fill="#f4b400"/><path d="M465 51h10.6" stroke="#1c6ec6" stroke-width="2.2"/><path d="M471.4 46.6l4.8 4.4l-4.8 4.4" fill="none" stroke="#1c6ec6" stroke-width="2.2"/><rect x="519.2" y="31.3" width="23" height="16.6" fill="none" stroke="#1a68c0" stroke-width="2.4"/><rect x="522.6" y="49.4" width="7" height="2.4" fill="#1a68c0"/><rect x="518.5" y="51.4" width="15.5" height="2.2" fill="#1a68c0"/><rect x="534.6" y="45.4" width="10" height="10.6" fill="#fff" stroke="#7a7a7a" stroke-width="0.9"/><path d="M535.8 54.6l2.6-3.8l1.8 2.2l1.4-1.6l2.2 3.2z" fill="#4a9a48"/><circle cx="542.6" cy="47.8" r="1.1" fill="#f08a30"/><rect x="570.80" y="30.80" width="6.15" height="6" fill="#3d7fc8"/><rect x="583.10" y="30.80" width="6.15" height="6" fill="#5a95d2"/><rect x="576.95" y="36.80" width="6.15" height="6" fill="#6fa3da"/><rect x="589.25" y="36.80" width="6.15" height="6" fill="#a8c8eb"/><rect x="570.80" y="42.80" width="6.15" height="6" fill="#5b93d2"/><rect x="583.10" y="42.80" width="6.15" height="6" fill="#a4c6ea"/><rect x="576.95" y="48.80" width="6.15" height="6" fill="#c9dcf1"/><rect x="589.25" y="48.80" width="6.15" height="6" fill="#dfe9f5"/><rect x="635.6" y="31.2" width="12.8" height="6.4" fill="#fff" stroke="#666a70" stroke-width="1.3"/><path d="M629.5 38.4h24.8v10.4h-24.8z" fill="#5c6068"/><path d="M633.6 36h16.6v4.4a1.6 1.6 0 0 1-1.6 1.6h-13.4a1.6 1.6 0 0 1-1.6-1.6z" fill="#1a6cc8" stroke="#fff" stroke-width="0.8"/><rect x="635.6" y="47.4" width="12.8" height="7" fill="#fff" stroke="#666a70" stroke-width="1.3"/><line x1="638" y1="51" x2="646" y2="51" stroke="#aaa" stroke-width="1.6"/><rect x="630.6" y="44.4" width="2.4" height="1.4" fill="#dde"/><rect x="687.4" y="29.8" width="10.8" height="5.4" fill="#fff" stroke="#595d64" stroke-width="1.4"/><path d="M680.6 36.2h5v13h-5z M702.2 36.2h3v4.4h-3z" fill="#5a5f68"/><path d="M684.8 34.2h15.4v4.6a1.8 1.8 0 0 1-1.8 1.8h-11.8a1.8 1.8 0 0 1-1.8-1.8z" fill="#1a6cc8" stroke="#fff" stroke-width="0.8"/><path d="M686 40.6h7.4v8.6h-7.4z" fill="#5a5f68"/><rect x="681.4" y="44.8" width="3.6" height="1.4" fill="#c8d2e0"/><path d="M687 47.6v6.6h6.2" fill="none" stroke="#595d64" stroke-width="1.4"/><rect x="689" y="50.2" width="2" height="1.2" fill="#595d64"/><path d="M700.2 41.9l6 2.2v4.8c0 3.4-2.6 5.8-6 7c-3.4-1.2-6-3.6-6-7v-4.8z" fill="#fff" stroke="#4a9b4c" stroke-width="1.5"/><path d="M697.4 48.6l2 1.8l3.6-3.4" fill="none" stroke="#50555c" stroke-width="1.5"/><path d="M734.6 30.6h14.2l5.8 5.8v19h-20z" fill="#fff" stroke="#7b7b7b" stroke-width="1.2"/><path d="M748.8 30.6v5.8h5.8" fill="none" stroke="#7b7b7b" stroke-width="1"/><text x="745" y="51.3" text-anchor="middle" font-family="Liberation Serif" font-size="19.5" fill="#2a6db5">A</text><path d="M792.6 33.5v17.8c0 2 4.4 3.3 9.9 3.3s9.9-1.3 9.9-3.3v-17.8z" fill="#f5b400"/><ellipse cx="802.5" cy="33.4" rx="9.9" ry="3.2" fill="#f7bd1a" stroke="#fde9a6" stroke-width="0.8"/><circle cx="812.8" cy="48.6" r="4.2" fill="#fff" stroke="#2f9a48" stroke-width="1.8"/><line x1="809.8" y1="51.6" x2="805.6" y2="55.6" stroke="#2f9a48" stroke-width="2"/><rect x="846.2" y="32" width="20.3" height="20.9" fill="#f5b400"/><path d="M851 33.4h10.6v-1.6h-3.4a2 2 0 0 0-3.8 0h-3.4z" fill="#5a606a" stroke="#5a606a" stroke-width="0.8"/><path d="M857.6 39.8h9.6l4.2 4.2v11.4h-13.8z" fill="#fff" stroke="#5b6170" stroke-width="1.1"/><path d="M867.2 39.8v4.2h4.2" fill="none" stroke="#5b6170" stroke-width="0.9"/><g stroke="#3c5f8c" stroke-width="0.9"><line x1="859.8" y1="42.6" x2="865" y2="42.6"/><line x1="859.8" y1="45" x2="865" y2="45"/><line x1="859.8" y1="47.4" x2="869.4" y2="47.4"/><line x1="859.8" y1="49.8" x2="869.4" y2="49.8"/><line x1="859.8" y1="52.2" x2="869.4" y2="52.2"/></g><rect x="21.9" y="141" width="12.6" height="12" fill="#fff" stroke="#a0a4aa" stroke-width="1"/><rect x="21.4" y="139.9" width="13.6" height="3.8" fill="#c9471f"/><text x="28.2" y="151.8" text-anchor="middle" font-family="Liberation Sans" font-size="8.6" fill="#555">23</text><line x1="1045.4" y1="139.4" x2="1045.4" y2="152.2" stroke="#6a6e74" stroke-width="1"/><line x1="1050.4" y1="139.4" x2="1050.4" y2="152.2" stroke="#6a6e74" stroke-width="1"/><line x1="1054.5" y1="139.4" x2="1054.5" y2="152.2" stroke="#6a6e74" stroke-width="1"/><rect x="1043.1000000000001" y="143.2" width="4.6" height="1.8" fill="#50555b"/><rect x="1048.1000000000001" y="148.0" width="4.6" height="1.8" fill="#50555b"/><rect x="1052.2" y="141.29999999999998" width="4.6" height="1.8" fill="#50555b"/><circle cx="1095" cy="144.3" r="4.5" fill="none" stroke="#1f5fa8" stroke-width="1.9"/><line x1="1098.3" y1="147.6" x2="1102.2" y2="151.5" stroke="#1f5fa8" stroke-width="2.2"/><path d="M1147.2 142.4A5.6 5.6 0 1 0 1147.7 148.6" fill="none" stroke="#23a0a8" stroke-width="2"/><path d="M1149.3 139.4v5.6h-5.6z" fill="#23a0a8"/><path d="M1182.8 140h9.6l2.4 2.4v9.4h-12z" fill="#fff" stroke="#1f5fa8" stroke-width="1.9"/><rect x="1186" y="140.2" width="4.6" height="3.8" fill="#fff" stroke="#1f5fa8" stroke-width="0.9"/><rect x="1188.6" y="141" width="1.3" height="2.2" fill="#2a2a2a"/><path d="M1185.2 152.6c1.6-1.2 3.2-3.6 3.6-6.4c0.8 2.8 3.2 4.6 7 5" fill="none" stroke="#d2574e" stroke-width="1.3"/></svg>
</body></html>
